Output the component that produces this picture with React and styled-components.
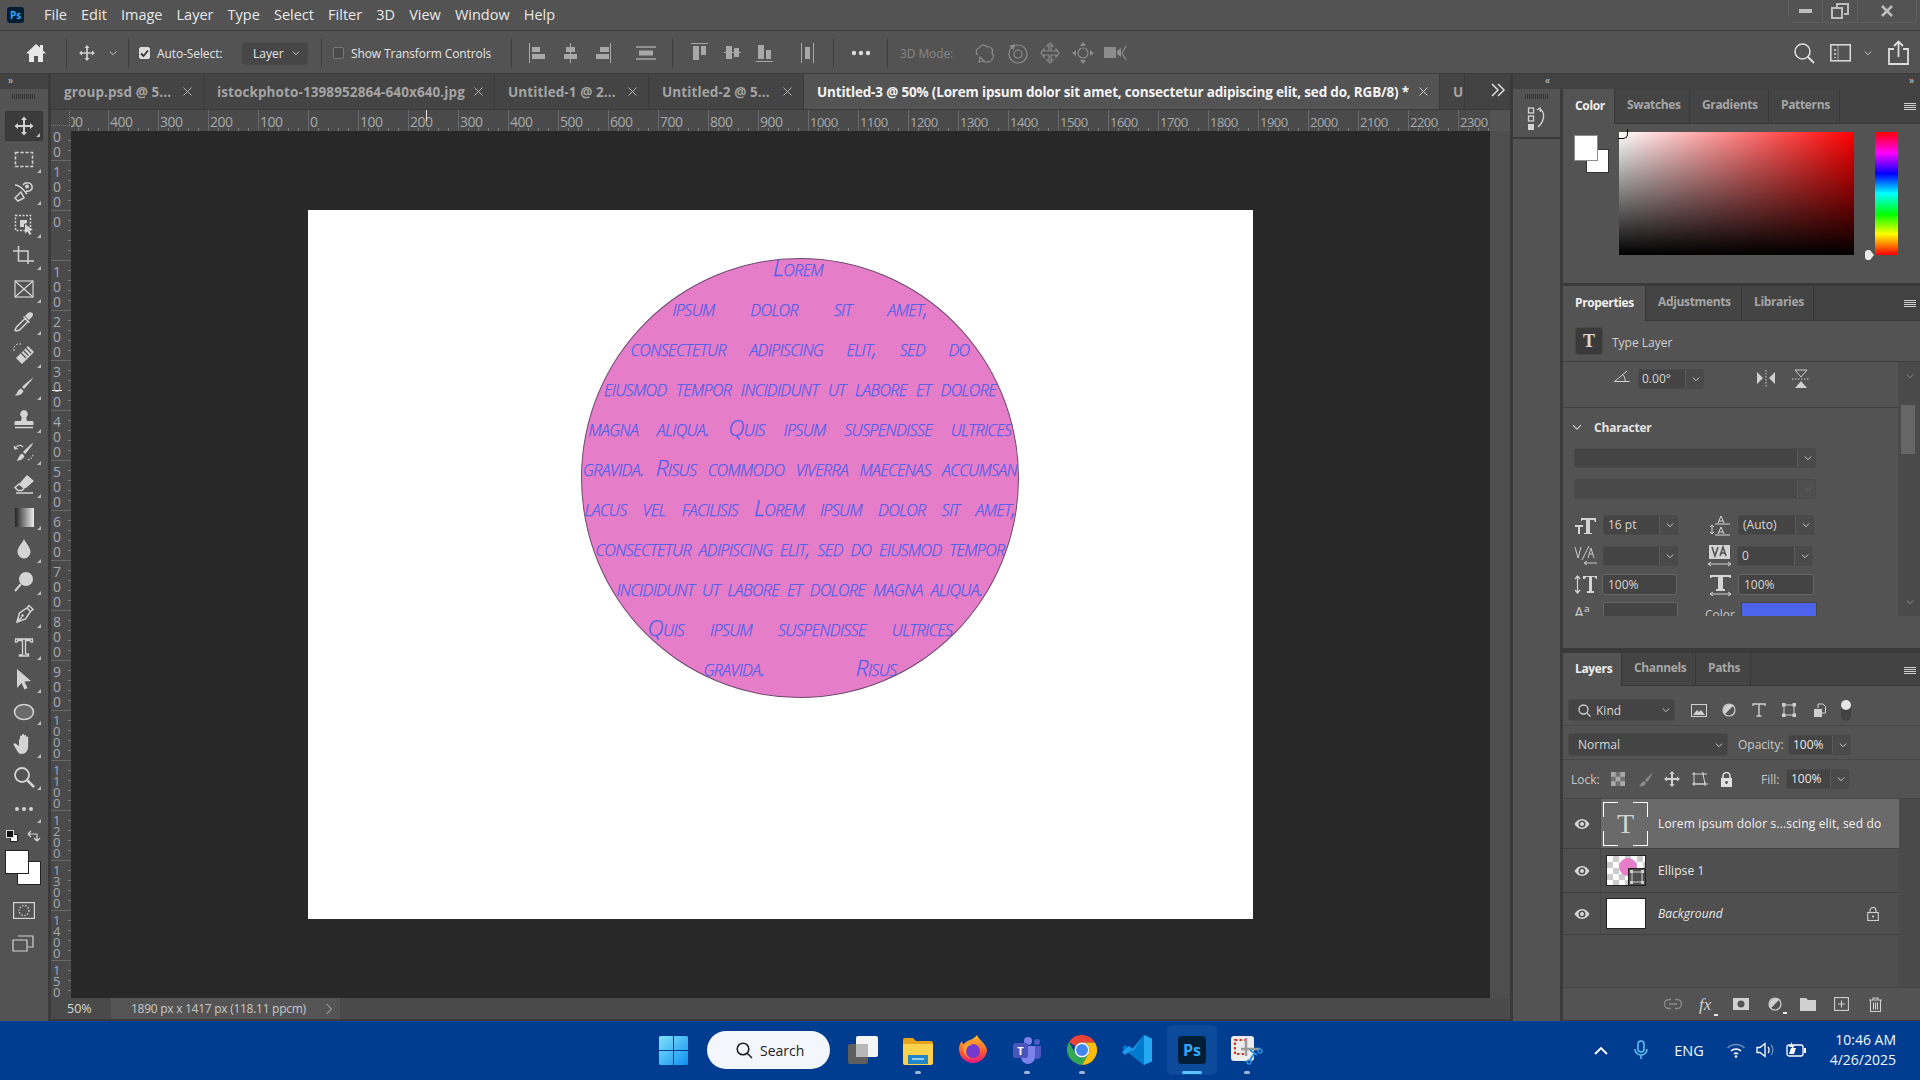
import React from "react";
import styled, { createGlobalStyle } from "styled-components";

const UI = `"Open Sans", "Noto Sans", sans-serif`;

const Global = createGlobalStyle`
  html, body { margin: 0; padding: 0; background: #535353; }
  body { width: 1920px; height: 1080px; overflow: hidden; font-family: ${UI}; }
  * { box-sizing: border-box; }
`;

const Page = styled.div`
  width: 1920px; height: 1080px; display: flex; flex-direction: column; overflow: hidden; background: #535353;
`;

/* ---------- menu ---------- */
const MenuBar = styled.div`
  height: 31px; flex: none; display: flex; align-items: center; position: relative;
  padding: 0 0 1px 7px; background: #535353; border-bottom: 1px solid #393939;
`;
const PsBadge = styled.div`
  width: 17px; height: 16px; border-radius: 3px; background: #001e36; color: #31a8ff;
  font: 700 10px/16px ${UI}; text-align: center; margin-right: 20px;
`;
const MenuItem = styled.span`
  font-size: 14.5px; color: #e8e8e8; margin-right: 14.1px;
`;
const WindowControls = styled.div`
  position: absolute; right: 3px; top: 0; width: 129px; height: 23px; display: flex;
  border: 1px solid #5e5e5e; border-top: 0; border-radius: 0 0 5px 5px;
`;
const WinBtn = styled.div`
  flex: ${p => p.$grow || 1}; display: flex; align-items: center; justify-content: center;
  border-left: ${p => (p.$first ? "0" : "1px solid #5e5e5e")};
`;

/* ---------- options ---------- */
const OptionsBar = styled.div`
  height: 43px; flex: none; display: flex; align-items: center; background: #535353; border-bottom: 1px solid #3b3b3b;
  padding: 2px 11px 0 0;
`;
const Glyph = styled.svg`
  flex: none; display: block; margin-left: ${p => p.$ml || 0}px; color: ${p => p.$c || "#d4d4d4"};
`;
const OptSep = styled.div`
  width: 1px; height: 29px; flex: none; background: #3d3d3d; margin-left: ${p => p.$ml}px;
`;
const OptLabel = styled.span`
  flex: none; width: ${p => p.$w}px; margin-left: ${p => p.$ml}px; font-size: 12px; white-space: nowrap;
  color: ${p => p.$c || "#e4e4e4"}; letter-spacing: -0.1px;
`;
const CheckBox = styled.div`
  flex: none; width: 11px; height: 12px; border-radius: 2px; margin-left: ${p => p.$ml}px;
  background: ${p => (p.$on ? "#dcdcdc" : "#4a4a4a")}; border: 1px solid ${p => (p.$on ? "#dcdcdc" : "#777")};
  display: flex; align-items: center; justify-content: center;
`;
const OptSelect = styled.div`
  flex: none; width: ${p => p.$w}px; margin-left: ${p => p.$ml}px; height: 23px; border: 1px solid #4a4a4a; border-radius: 3px;
  background: #464646; font-size: 12px; color: #e8e8e8; display: flex; align-items: center; justify-content: space-between;
  padding: 0 7px 0 10px;
`;
const RightGroup = styled.div`
  margin-left: auto; display: flex; align-items: center;
`;

/* ---------- workspace ---------- */
const Workspace = styled.div`
  flex: none; height: 947px; display: flex; background: #3a3a3a;
`;
const ToolsColumn = styled.div`
  width: 48px; flex: none; background: #535353; display: flex; flex-direction: column; align-items: center;
`;
const CollapseStrip = styled.div`
  align-self: stretch; height: 15px; flex: none; background: #424242; color: #d0d0d0; font-size: 10px; line-height: 13px;
  padding-left: ${p => p.$pad ?? 8}px; letter-spacing: -1px;
`;
const Grip = styled.div`
  width: 24px; height: 5px; margin: ${p => p.$m || "5px 0 12px"}; flex: none;
  background: repeating-linear-gradient(90deg, #343434 0 1px, transparent 1px 2px);
`;
const Tool = styled.div`
  width: 38px; height: 32.5px; flex: none; position: relative; display: flex; align-items: center; justify-content: center;
  ${p => p.$active && "background:#3b3b3b; border-radius:2px; border:1px solid #343434; height:30px; margin-bottom:2px;"}
  &::after { content:""; position:absolute; right:2px; bottom:3px; border-style:solid; border-width:0 0 4px 4px; border-color:transparent transparent #bdbdbd transparent; }
`;
const Swatches = styled.div`
  position: relative; width: 48px; height: 68px; flex: none;
`;
const SwatchMini = styled.div`
  position: absolute; left: ${p => p.$x}px; top: ${p => p.$y}px; width: ${p => p.$s}px; height: ${p => p.$s2 || p.$s}px;
  background: ${p => p.$c}; border: 1px solid ${p => p.$b};
`;
const ToolBottom = styled.div`
  width: 38px; height: 33px; flex: none; display: flex; align-items: center; justify-content: center; position: relative;
`;
const Seam = styled.div`
  width: ${p => p.$w}px; flex: none; background: #3a3a3a;
`;

const DocColumn = styled.div`
  width: 1459px; flex: none; display: flex; flex-direction: column; background: #535353;
`;
const TabBar = styled.div`
  height: 36px; flex: none; display: flex; background: #424242; border-bottom: 1px solid #393939; position: relative;
`;
const Tab = styled.div`
  flex: none; width: ${p => p.$w}px; display: flex; align-items: center; justify-content: space-between; padding: 0 11px 0 13px;
  background: ${p => (p.$active ? "#535353" : "#444")}; color: ${p => (p.$active ? "#f4f4f4" : "#a4a4a4")};
  border-right: 1px solid #3b3b3b; font-size: 13.5px; font-weight: 700; white-space: nowrap; overflow: hidden; letter-spacing: ${p => (p.$active ? -0.18 : 0.1)}px;
`;
const TabMore = styled.div`
  position: absolute; left: 1439px; top: 8px; color: #dcdcdc;
`;
const RulerRow = styled.div`
  height: 21px; flex: none; display: flex; background: #535353;
`;
const RulerCorner = styled.div`
  width: 20px; flex: none; background: #4a4a4a; position: relative;
  &::after { content:""; position:absolute; left:0; top:15px; width:19px; height:0; border-top:1px dotted #777; }
  &::before { content:""; position:absolute; left:18px; top:0; height:15px; width:0; border-left:1px dotted #777; }
`;
const HRuler = styled.div`
  width: 1419px; flex: none; display: flex; background: #4a4a4a; overflow: hidden; position: relative;
`;
const HCell = styled.div`
  width: 50px; flex: none; height: 21px; position: relative; margin-left: ${p => p.$ml || 0}px;
  border-left: 1px solid #6a6a6a; padding-left: 1px; color: #a6a9ad; font-size: ${p => p.$small ? 13 : 14}px; line-height: 24px; letter-spacing: -0.5px; white-space: nowrap;
  background: repeating-linear-gradient(90deg, transparent 0 9px, #7c7c7c 9px 10px) 0 bottom / 100% 3px no-repeat;
`;
const CursorMarkH = styled.div`
  position: absolute; left: 355px; top: 0; width: 1px; height: 11px; background: #e8e8e8;
`;
const MidRow = styled.div`
  flex: 1; min-height: 0; display: flex;
`;
const VRuler = styled.div`
  width: 20px; height: 867px; flex: none; background: #4a4a4a; overflow: hidden; position: relative; display: flex; flex-direction: column;
`;
const VCell = styled.div`
  height: 50px; flex: none; margin-top: ${p => p.$mt || 0}px; border-top: 1px solid #6a6a6a; display: flex; flex-direction: column;
  padding: ${p => p.$tight ? 4 : 3}px 0 0 2px; color: #a6a9ad; position: relative;
  background: repeating-linear-gradient(180deg, transparent 0 9px, #7c7c7c 9px 10px) right top / 3px 100% no-repeat;
`;
const VDigit = styled.span`
  font-size: ${p => p.$tight ? 13 : 14}px; line-height: ${p => p.$tight ? 11 : 15}px; height: ${p => p.$tight ? 11 : 15}px;
`;
const CursorMarkV = styled.div`
  position: absolute; left: 1px; top: 259px; height: 1px; width: 10px; background: #e8e8e8;
`;
const Canvas = styled.div`
  width: 1419px; height: 867px; flex: none; background: #282828; padding: 79px 0 0 237px;
`;
const DocPage = styled.div`
  width: 945px; height: 709px; background: #fff; padding: 48px 0 0 273px;
`;
const Circle = styled.div`
  width: 438px; height: 440px; border-radius: 50%; background: #e67dc8; border: 1px solid #6c4a70;
  display: flex; flex-direction: column; align-items: center;
`;
const TextFrame = styled.div`
  margin-top: -11px; display: flex; flex-direction: column; align-items: center;
`;
const TextLine = styled.div`
  width: ${p => p.$w}px; height: 40px; display: flex; justify-content: space-between; align-items: center; white-space: nowrap;
  font-family: "Open Sans", sans-serif; font-style: italic; font-variant: small-caps; font-weight: 300;
  font-size: 22.5px; color: #4a60ec; letter-spacing: -0.6px; line-height: 40px; -webkit-text-stroke: 0.25px #4a60ec;
`;
const ScrollStrip = styled.div`
  width: 20px; flex: none; background: #4e4e4e;
`;
const StatusBar = styled.div`
  height: 23px; flex: none; display: flex; align-items: stretch; background: #4a4a4a; color: #d8d8d8; font-size: 12px; border-bottom: 2px solid #3a3a3a;
`;
const StatusZoom = styled.div`
  width: 60px; flex: none; padding-left: 16px; line-height: 21px; font-size: 12.5px;
`;
const StatusInfo = styled.div`
  width: 229px; flex: none; background: #545454; padding: 0 7px 0 20px; display: flex; justify-content: space-between; align-items: center; letter-spacing: -0.27px; color: #c8c8c8;
`;

/* ---------- dock and panels ---------- */
const DockColumn = styled.div`
  width: 47px; flex: none; background: #3a3a3a; display: flex; flex-direction: column;
`;
const DockIcons = styled.div`
  height: 50px; flex: none; background: #535353; display: flex; flex-direction: column; align-items: center; border-bottom: 2px solid #3a3a3a;
`;
const DockFill = styled.div`
  flex: 1; background: #535353;
`;
const PanelsColumn = styled.div`
  width: 359px; flex: none; display: flex; flex-direction: column; background: #3a3a3a; position: relative;
`;
const TopStrip = styled.div`
  position: absolute; left: -50px; width: 409px; top: 0; height: 15px; background: #424242; color: #d0d0d0; font-size: 10px; line-height: 13px; letter-spacing: -1px;
  display: flex; justify-content: space-between; padding: 0 9px 0 32px;
`;
const Panel = styled.div`
  flex: none; height: ${p => p.$h}px; margin-top: ${p => p.$mt}px; background: #535353; display: flex; flex-direction: column; overflow: hidden;
`;
const PanelTabs = styled.div`
  height: ${p => p.$h || 35}px; flex: none; background: #424242; display: flex; position: relative; border-bottom: 1px solid #393939;
`;
const PanelTab = styled.div`
  width: ${p => p.$w}px; flex: none; display: flex; align-items: center; padding: 0 0 3px ${p => p.$pl || 12}px; font-size: 12px; font-weight: 700; letter-spacing: -0.35px;
  background: ${p => (p.$active ? "#535353" : "#444")}; color: ${p => (p.$active ? "#f0f0f0" : "#a6a6a6")};
  border-right: 1px solid #383838; margin-bottom: ${p => (p.$active ? "-1px" : 0)};
`;
const Burger = styled.div`
  position: absolute; right: 6px; top: 14px; width: 12px; height: 7px;
  background: repeating-linear-gradient(180deg, #cfcfcf 0 1px, transparent 1px 2px);
`;
const ColorBody = styled.div`
  flex: 1; display: flex; position: relative; padding: 8px 0 0 56px;
`;
const BigSwatches = styled.div`
  position: absolute; left: 11px; top: 11px; width: 36px; height: 40px;
`;
const ColorField = styled.div`
  width: 235px; height: 123px; flex: none; position: relative;
  background: linear-gradient(to top, #000, rgba(0,0,0,0)), linear-gradient(to right, #fff, #f00);
  &::after { content:""; position:absolute; left:-1px; top:-3px; width:9px; height:9px; border-radius:0 0 5px 0; border:1px solid #000; border-top:0; border-left:0; }
`;
const HueBar = styled.div`
  width: 23px; height: 123px; margin-left: 21px; flex: none; position: relative;
  background: linear-gradient(to bottom, #f00 0%, #f0f 17%, #00f 34%, #0ff 50%, #0f0 67%, #ff0 83%, #f00 100%);
  &::before { content:""; position:absolute; left:-10px; bottom:-5px; width:5px; height:10px; background:#e8e8e8; border-radius:3px 0 0 3px; }
  &::after { content:""; position:absolute; left:-5px; bottom:-5px; border-style:solid; border-width:5px 0 5px 4px; border-color:transparent transparent transparent #e8e8e8; }
`;
const PropsHeader = styled.div`
  height: 41px; flex: none; display: flex; align-items: center; padding-left: 12px; border-bottom: 1px solid #3e3e3e; color: #cfcfcf; font-size: 12px;
`;
const TypeBadge = styled.div`
  width: 28px; height: 28px; flex: none; background: #3a3a3a; border: 1px solid #4a4a4a; border-radius: 3px; color: #d8d8d8; margin-right: 9px;
  font: 700 18px/26px "Liberation Serif", serif; text-align: center;
`;
const TypeCaption = styled.span`
  padding-top: 3px;
`;
const PropsScrollWrap = styled.div`
  height: 254px; flex: none; display: flex;
`;
const PropsMain = styled.div`
  width: 335px; flex: none; overflow: hidden; display: flex; flex-direction: column;
`;
const ScrollRail = styled.div`
  width: 24px; flex: none; background: #4a4a4a; position: relative; display: flex; flex-direction: column; justify-content: space-between; align-items: center; padding: 10px 0;
`;
const ScrollThumb = styled.div`
  position: absolute; left: 3px; top: 43px; width: 14px; height: 49px; background: #666;
`;
const PropRow = styled.div`
  height: 46px; flex: none; display: flex; align-items: flex-start; padding-top: 7px; border-bottom: 1px solid #3e3e3e;
`;
const CharHead = styled.div`
  height: 38px; margin-bottom: 2px; flex: none; display: flex; align-items: center; padding-left: 9px; color: #e2e2e2; font-size: 12px; font-weight: 700; letter-spacing: -0.2px;
`;
const CharTitle = styled.span`
  margin-left: 12px;
`;
const Field = styled.div`
  flex: none; width: ${p => p.$w}px; height: ${p => p.$h || 20}px; margin-left: ${p => p.$ml || 0}px; display: flex;
  background: #444; border: 1px solid ${p => p.$border || "#4a4a4a"}; border-radius: 3px; color: ${p => p.$c || "#d6d6d6"}; font-size: 12px; overflow: hidden;
`;
const DropField = styled(Field)`
  align-items: center; justify-content: space-between; padding: 0 4px 0 9px;
`;
const KindText = styled.span`
  flex: 1; margin-left: 5px;
`;
const FieldText = styled.div`
  flex: 1; padding-left: ${p => p.$pl ?? 5}px; line-height: ${p => p.$lh || 18}px; white-space: nowrap; background: ${p => p.$bg || "transparent"};
  color: ${p => p.$c || "inherit"};
`;
const FieldArrow = styled.div`
  width: ${p => p.$w || 18}px; flex: none; border-left: 1px solid #5a5a5a; padding-left: 2px; display: flex; align-items: center; justify-content: center; background: ${p => p.$bg || "#4a4a4a"};
`;
const CharRow = styled.div`
  flex: none; height: ${p => p.$h}px; margin-top: ${p => p.$mt || 0}px; display: flex; align-items: ${p => p.$start ? "flex-start" : "center"}; padding-left: ${p => p.$pl || 0}px;
`;
const TinyLabel = styled.span`
  font-size: ${p => p.$fs || 12}px; line-height: ${p => p.$lh ? p.$lh + "px" : "normal"}; color: #c8c8c8; margin-left: ${p => p.$ml || 0}px; width: ${p => p.$w || "auto"}px; flex: none; white-space: nowrap;
`;
const ColorChip = styled.div`
  width: 76px; height: 20px; margin-left: 2px; flex: none; background: #4d63ea; border: 1px solid #444;
`;
const LayerToolbar = styled.div`
  height: ${p => p.$h}px; flex: none; display: flex; align-items: center; padding: ${p => p.$pt || 0}px 0 0 ${p => p.$pl || 5}px; border-bottom: 1px solid #474747;
`;
const ToggleDot = styled.div`
  position: relative; margin-left: ${p => p.$ml}px; width: 10px; height: 21px; flex: none; border-radius: 5px; background: #424242;
  &::before { content:""; position:absolute; left:0; top:0; width:10px; height:10px; border-radius:50%; background:#e4e4e4; }
`;
const LayerRow = styled.div`
  height: ${p => p.$h}px; flex: none; display: flex; align-items: center; border-bottom: 1px solid #3f3f3f;
`;
const EyeCol = styled.div`
  width: 38px; height: 100%; flex: none; display: flex; align-items: center; justify-content: center; border-right: 1px solid #474747;
`;
const LayerMain = styled.div`
  width: 298px; height: 100%; flex: none; display: flex; align-items: center; position: relative;
  background: ${p => (p.$sel ? "#6a6a6a" : "transparent")};
`;
const TypeThumb = styled.div`
  width: 45px; height: 44px; flex: none; margin-left: 2px; display: flex; align-items: center; justify-content: center; position: relative;
  color: #d4d4d4; font: 400 28px/1 "Liberation Serif", serif;
  background:
    linear-gradient(#fff,#fff) 0 0/15px 1px no-repeat, linear-gradient(#fff,#fff) 0 0/1px 15px no-repeat,
    linear-gradient(#fff,#fff) 100% 0/15px 1px no-repeat, linear-gradient(#fff,#fff) 100% 0/1px 15px no-repeat,
    linear-gradient(#fff,#fff) 0 100%/15px 1px no-repeat, linear-gradient(#fff,#fff) 0 100%/1px 15px no-repeat,
    linear-gradient(#fff,#fff) 100% 100%/15px 1px no-repeat, linear-gradient(#fff,#fff) 100% 100%/1px 15px no-repeat;
`;
const ShapeThumb = styled.div`
  width: 40px; height: 31px; flex: none; margin-left: 5px; position: relative; border: 1px solid #222;
  background: conic-gradient(#ccc 25%, #fff 0 50%, #ccc 0 75%, #fff 0) 0 0 / 12px 12px;
  &::before { content:""; position:absolute; left:12px; top:2px; width:18px; height:18px; border-radius:50%; background:#e67dc8; }
`;
const ShapeBadge = styled.div`
  position: absolute; right: -1px; bottom: -1px; width: 18px; height: 18px; background: #4e4e4e; border: 1px solid #222; display: flex; align-items: center; justify-content: center;
`;
const WhiteThumb = styled.div`
  width: 40px; height: 31px; flex: none; margin-left: 5px; background: #fff; border: 1px solid #222;
`;
const LayerName = styled.span`
  position: absolute; left: 57px; font-size: 12px; color: ${p => p.$c || "#e8e8e8"}; font-style: ${p => (p.$it ? "italic" : "normal")}; white-space: nowrap; letter-spacing: ${p => p.$ls ?? 0.1}px;
`;
const LayersFill = styled.div`
  flex: 1;
`;
const LayersFoot = styled.div`
  flex: 1; display: flex; align-items: center; border-top: 1px solid #424242; background: #535353; padding-left: 101px;
`;
const LayerList = styled.div`
  flex: none; width: 335px;
`;
const LayerListWrap = styled.div`
  flex: none; display: flex; flex-direction: column; height: 188px; background: linear-gradient(90deg, #4f4f4f 335px, #4a4a4a 335px);
`;
const CaretWrap = styled.div`
  position: relative; flex: none; margin-left: ${p => p.$ml}px;
  &::after { content:""; position:absolute; right:-5px; bottom:-3px; width:4px; height:2px; background:#e8e8e8; }
`;
const FxLabel = styled.span`
  display: block; width: 14px; font: italic 400 17px/1 "Liberation Serif", serif; color: #cfcfcf;
`;

/* ---------- taskbar ---------- */
const Taskbar = styled.div`
  height: 59px; flex: none; position: relative; background: #003c8f; display: flex; align-items: center; color: #fff; padding: 0 0 2px 659px; border-top: 1px solid #0a468f;
`;
const SearchPill = styled.div`
  width: 123px; height: 38px; flex: none; margin-left: 19px; background: #f3f6fc; border-radius: 19px; display: flex; align-items: center; padding-left: 29px; color: #1c1c1c; font-size: 14px; gap: 7px;
`;
const TaskSlot = styled.div`
  flex: none; width: ${p => p.$w}px; margin-left: ${p => p.$ml}px; height: 50px; position: relative; display: flex; align-items: center; justify-content: center;
  ${p => p.$active && "background:#0c4a9c; border-radius:5px;"}
  ${p => p.$dot && `&::after{content:""; position:absolute; left:50%; transform:translateX(-50%); bottom:1px; width:${p.$active ? 20 : 6}px; height:3px; border-radius:2px; background:${p.$active ? "#58c6fb" : "#9fb5d6"};}`}
`;
const PsTile = styled.div`
  width: 28px; height: 28px; border-radius: 4px; background: #001e36; color: #31a8ff; font: 700 16px/28px ${UI}; text-align: center;
`;
const Tray = styled.div`
  position: absolute; right: 24px; top: 0; bottom: 2px; display: flex; align-items: center;
`;
const TrayText = styled.span`
  font-size: 14.5px; margin-left: ${p => p.$ml}px; color: #f4f8ff;
`;
const Clock = styled.div`
  margin-left: 24px; text-align: right; font-size: 14px; line-height: 20px; color: #f4f8ff;
`;

/* ---------- glyphs ---------- */
const S = ({ w = 24, h = 24, vb, ml, c, children, ...rest }) => (
  <Glyph width={w} height={h} viewBox={vb || `0 0 ${w} ${h}`} $ml={ml} $c={c} fill="none" stroke="currentColor" strokeWidth="1.5" {...rest}>{children}</Glyph>
);
const SwapIcon = styled(S)`
  position: absolute; left: 27px; top: 4px;
`;
const LockIcon = styled(S)`
  position: absolute; left: 266px;
`;
const F = { fill: "currentColor", stroke: "none" };

const Chevron = ({ ml, c = "#c8c8c8", s = 8 }) => (
  <S w={s} h={s} vb="0 0 8 8" ml={ml} c={c} strokeWidth="1"><path d="M.8 2.5 4 5.7 7.2 2.5" /></S>
);
const MovePath = "M12 2.5l3 3.5h-2v5h5V9l3.5 3-3.5 3v-2h-5v5h2l-3 3.5L9 18h2v-5H6v2l-3.5-3L6 9v2h5V6H9z";

const toolIcons = [
  <S><path {...F} d={MovePath} /></S>,
  <S><rect x="3.5" y="5.5" width="17" height="14" strokeDasharray="3.2 1.8" /></S>,
  <S><path d="M3 5c4 0 9 5 12 9M3 18l6-6 3 6-6 3zM11 5c2-3 8-3 9 1s-3 6-6 5" /><circle cx="15" cy="6.5" r="2" {...F} /></S>,
  <S><rect x="3.5" y="3.5" width="15" height="15" strokeDasharray="2 1.5" /><path {...F} d="M8 8h7v3l-3 1v3H8zM13 12l8 6-3.5.5 2 3.5-2 1-2-3.5-2.5 2z" /></S>,
  <S><path d="M1 6h15v13M6.5 1v15h15M19 16h3" /></S>,
  <S strokeWidth="1.2"><rect x="3" y="4" width="18" height="16" /><path d="M3 4l18 16M21 4L3 20" /></S>,
  <S><path d="M4 21l-1-1 1.5-3L13 8.5l3 3L7.500 20zM11.500 6.500l6 6" /><path {...F} d="M13 6l3-3c1.500-1.500 5-1 5 1.500 0 1-.5 2-1.500 3l-2.500 2.500z" /></S>,
  <S strokeWidth="1"><path {...F} d="M4 16L16 4l6 6-12 12z" /><path d="M2 9V5l3-3h4" strokeDasharray="2 1.500" /><path stroke="#535353" strokeWidth="1.300" d="M9 11l5 5M11.500 8.500l5 5M14 6l5 5" /></S>,
  <S><path {...F} d="M21.500 2.500c-3 4-7 9-9.500 11.500l-2-2c3-3 8-7 11.500-9.500zM9 13.500l2.500 2.500c-1 3-4 5-8.500 4.500 2.500-1.500 2-5.500 6-7z" /></S>,
  <S><path {...F} d="M12 3a4 4 0 0 1 2.500 7c-.5 1.500 0 3 1 4H20c1 0 1.500.5 1.500 1.500V18h-19v-2.500c0-1 .5-1.500 1.500-1.500h4.500c1-1 1.500-2.500 1-4A4 4 0 0 1 12 3z" /><path d="M3 20.500h18" /></S>,
  <S strokeWidth="1.200"><path {...F} d="M21.500 2.500c-2 4-6 9-8.500 11.500l-2-2c3-3 7-7 10.500-9.500zM10 13.500l2.500 2.500c-1 3-4 5-8 4.500 2.500-1.500 2-5.500 5.500-7z" /><path d="M3 8c3-3 6-3 8-1M2 6l1 3 3-.5" /><path d="M16 20c3-1 5-3 5-6" strokeDasharray="1.500 1.500" /></S>,
  <S><path {...F} d="M15 3l7 6-8 7-2 0-5-4z" /><path d="M7 12l5 4-2 2.500H6l-3-3zM4 21h17" /></S>,
];
const toolIcons2 = [
  <S strokeWidth="0"><defs><linearGradient id="gr1" x1="0" y1="0" x2="1" y2="0"><stop offset="0" stopColor="#222" /><stop offset="1" stopColor="#eee" /></linearGradient></defs><rect x="3" y="3" width="19" height="19" fill="url(#gr1)" /></S>,
  <S><path {...F} d="M12 2c2 4.500 6.500 8 6.500 13a6.500 6.500 0 0 1-13 0C5.500 10 10 6.500 12 2z" /></S>,
  <S><circle cx="14" cy="9" r="7" {...F} /><path d="M9 14l-6 7" strokeWidth="2" /></S>,
  <S><path d="M5 20l2.500-9L15 6l3.500 3.500L13.500 17zM5 20l5-5M15 6l2-2.500L21 7.500 18.500 9.500" /><circle cx="10.500" cy="13.500" r="1.300" {...F} /></S>,
  <S strokeWidth="1.300"><path d="M3.500 7V4h17v3h-1.500l-1-1.500H13.500v13.500h3V21h-9v-1h3V5.500H6L5 7z" /></S>,
  <S><path {...F} d="M5 2l14 12-6.500.5 3 6.500-3 1.500-3-6.500L5 21z" /></S>,
  <S strokeWidth="1.500"><ellipse cx="12" cy="12" rx="9.500" ry="7.500" fill="#6a6a6a" /></S>,
  <S><path {...F} d="M8 8V4.500c0-1.500 2-1.500 2 0V3c0-1.500 2.200-1.500 2.200 0v1c0-1.500 2-1.500 2 0v1.500c0-1.500 2-1.300 2 0V14c0 5-3 8-6.500 8-3 0-4-2-5-4l-3-5c-.7-1.300 1-2.500 2-1.300L7 14V8c0-1.500 1-1.300 1 0z" /></S>,
  <S strokeWidth="1.800"><circle cx="10" cy="10" r="7" /><path d="M15 15l7 7" strokeWidth="2.500" /></S>,
  <S><g {...F}><circle cx="5" cy="12" r="2" /><circle cx="12" cy="12" r="2" /><circle cx="19" cy="12" r="2" /></g></S>,
];

const AlignIcon = ({ kind, ml, w, c = "#a8a8a8" }) => {
  const shapes = {
    l: <><path d="M.5 0v20" strokeWidth="1" /><path {...F} d="M3 4h8v5H3zM3 11h13v5H3z" /></>,
    c: <><path d="M7.500 0v20" strokeWidth="1" /><path {...F} d="M3 4h9v5H3zM1 11h13v5H1z" /></>,
    r: <><path d="M15.500 0v20" strokeWidth="1" /><path {...F} d="M5 4h9v5H5zM1 11h13v5H1z" /></>,
    h: <><path d="M0 4h20M0 16h20" strokeWidth="1.300" /><path {...F} d="M3 7.500h14v5H3z" /></>,
    t: <><path d="M0 .5h17" strokeWidth="1" /><path {...F} d="M2 3h6v14H2zM10 3h5v9h-5z" /></>,
    m: <><path d="M0 9.500h17" strokeWidth="1" /><path {...F} d="M2 3h6v13H2zM10 5h5v9h-5z" /></>,
    b: <><path d="M0 18.500h17" strokeWidth="1" /><path {...F} d="M2 2h6v14H2zM10 7h5v9h-5z" /></>,
    d: <><path d="M.5 0v20M12.500 0v20" strokeWidth="1" /><path {...F} d="M4 4h5v12H4z" /></>,
  };
  return <S w={w} h={20} ml={ml} c={c}>{shapes[kind]}</S>;
};

const Eye = () => (
  <S w={16} h={12} c="#d8d8d8"><path {...F} d="M8 1c3.500 0 6 2.500 7.500 5C14 8.500 11.500 11 8 11S2 8.500.5 6C2 3.500 4.500 1 8 1zm0 1.500A3.500 3.500 0 1 0 8 9.500 3.500 3.500 0 0 0 8 2.500zM8 4a2 2 0 1 1 0 4 2 2 0 0 1 0-4z" fillRule="evenodd" /></S>
);

const ChromeIcon = () => (
  <svg width="30" height="30" viewBox="0 0 30 30">
    <path fill="#ea4335" d="M15 0a15 15 0 0 1 13 7.500H15a7.500 7.500 0 0 0-6.500 3.750L2 7A15 15 0 0 1 15 0z" />
    <path fill="#34a853" d="M2 7l6.500 11.750A7.500 7.500 0 0 0 15 22.500L8.500 28A15 15 0 0 1 2 7z" />
    <path fill="#34a853" d="M8.500 28l6.500-5.500a7.500 7.500 0 0 0 6.500-3.750L15 30a15 15 0 0 1-6.500-2z" />
    <path fill="#fbbc04" d="M28 7.500A15 15 0 0 1 15 30l6.500-11.250A7.500 7.500 0 0 0 15 7.500z" />
    <circle cx="15" cy="15" r="7.500" fill="#fff" />
    <circle cx="15" cy="15" r="6" fill="#4285f4" />
  </svg>
);

const TabX = ({ light }) => (
  <S w={9} h={9} c={light ? "#d8d8d8" : "#c0c0c0"} strokeWidth="0.900"><path d="M.5.500l8 8M8.500.500l-8 8" /></S>
);

const rulerH = [500,400,300,200,100,0,100,200,300,400,500,600,700,800,900,1000,1100,1200,1300,1400,1500,1600,1700,1800,1900,2000,2100,2200,2300];
const rulerV = [200,100,0,100,200,300,400,500,600,700,800,900,1000,1100,1200,1300,1400,1500];

const lines = [
  [54, "Lorem"],
  [255, "ipsum dolor sit amet,"],
  [339, "consectetur adipiscing elit, sed do"],
  [392, "eiusmod tempor incididunt ut labore et dolore"],
  [423, "magna aliqua. Quis ipsum suspendisse ultrices"],
  [434, "gravida. Risus commodo viverra maecenas accumsan"],
  [431, "lacus vel facilisis Lorem ipsum dolor sit amet,"],
  [409, "consectetur adipiscing elit, sed do eiusmod tempor"],
  [367, "incididunt ut labore et dolore magna aliqua."],
  [305, "Quis ipsum suspendisse ultrices"],
  [193, "gravida. Risus"],
];

const Select = ({ w, ml, text, h, pl }) => (
  <Field $w={w} $ml={ml} $h={h}><FieldText $pl={pl}>{text}</FieldText><FieldArrow><Chevron /></FieldArrow></Field>
);

export default function App() {
  return (
    <Page>
      <Global />
      <MenuBar>
        <PsBadge>Ps</PsBadge>
        {["File","Edit","Image","Layer","Type","Select","Filter","3D","View","Window","Help"].map(m => <MenuItem key={m}>{m}</MenuItem>)}
        <WindowControls>
          <WinBtn $first $grow={34}><S w={13} h={4} c="#bdbdbd"><rect x="0" y="0" width="13" height="4" {...F} /></S></WinBtn>
          <WinBtn $grow={34}><S w={18} h={16} c="#bdbdbd" strokeWidth="2"><rect x="1" y="5" width="10" height="10" /><path d="M6 4V1h11v10h-4" /></S></WinBtn>
          <WinBtn $grow={59}><S w={14} h={14} c="#bdbdbd" strokeWidth="2.500"><path d="M2 2l10 10M12 2L2 12" /></S></WinBtn>
        </WindowControls>
      </MenuBar>

      <OptionsBar>
        <S w={20} h={20} ml={26} c="#e8e8e8"><path {...F} d="M10 1L0 10.500h3V19h5v-6h4v6h5v-8.500h3l-3-3V2h-3v2.500z" /></S>
        <OptSep $ml={20} />
        <S w={20} h={20} vb="0 0 24 24" ml={10}><path {...F} d={MovePath} /></S>
        <Chevron ml={12} />
        <OptSep $ml={11} />
        <CheckBox $ml={10} $on><S w={9} h={9} c="#333" strokeWidth="1.800"><path d="M1 4.500l2.500 2.500L8 1.500" /></S></CheckBox>
        <OptLabel $w={67} $ml={7}>Auto-Select:</OptLabel>
        <OptSelect $w={66} $ml={18}>Layer<Chevron /></OptSelect>
        <OptSep $ml={13} />
        <CheckBox $ml={11} />
        <OptLabel $w={140} $ml={7}>Show Transform Controls</OptLabel>
        <OptSep $ml={20} />
        <AlignIcon kind="l" ml={17} w={17} />
        <AlignIcon kind="c" ml={17} w={15} />
        <AlignIcon kind="r" ml={17} w={16} />
        <AlignIcon kind="h" ml={25} w={20} />
        <OptSep $ml={16} />
        <AlignIcon kind="t" ml={18} w={17} />
        <AlignIcon kind="m" ml={16} w={17} />
        <AlignIcon kind="b" ml={15} w={17} />
        <AlignIcon kind="d" ml={28} w={13} />
        <OptSep $ml={19} />
        <S w={20} h={6} ml={17} c="#dcdcdc"><g {...F}><circle cx="3" cy="3" r="2.200" /><circle cx="10" cy="3" r="2.200" /><circle cx="17" cy="3" r="2.200" /></g></S>
        <OptSep $ml={16} />
        <OptLabel $w={54} $ml={12} $c="#868686">3D Mode:</OptLabel>
        <S w={22} h={22} ml={20} c="#8c8c8c" strokeWidth="1.200"><path d="M4 13c-3-2-2-6 1-7 1-3 6-4 8-1 3-1 7 2 5 6 2 2 2 5-1 7M6 15l-1 5 5-1zM9 19c3 2 6 1 8 0" /></S>
        <S w={21} h={22} ml={11} c="#8c8c8c" strokeWidth="1.200"><circle cx="11" cy="12" r="9" /><circle cx="11" cy="12" r="4" /><path {...F} d="M2 4l6-2-1 6z" /></S>
        <S w={20} h={22} ml={12} c="#8c8c8c" strokeWidth="1.200"><path d="M10 1l3 3h-2v5h5V7l3 4-3 4v-2h-5v5h2l-3 3-3-3h2v-5H4v2l-3-4 3-4v2h5V4H7z" /></S>
        <S w={22} h={22} ml={12} c="#8c8c8c" strokeWidth="1.200"><circle cx="11" cy="11" r="5" /><path {...F} d="M11 0l3 4H8zM11 22l3-4H8zM0 11l4-3v6zM22 11l-4-3v6z" /></S>
        <S w={23} h={22} ml={10} c="#8c8c8c" strokeWidth="1.200"><path {...F} d="M0 5h12v11H0zM13 9l4-3v9l-4-3z" /><path d="M22 4l-4 7 4 7" /></S>
        <RightGroup>
          <S w={22} h={22} strokeWidth="1.500" c="#dedede"><circle cx="9.500" cy="9.500" r="7.500" /><path d="M15 15l6 6" strokeWidth="2" /></S>
          <S w={21} h={18} ml={15} c="#dedede"><rect x=".8" y=".8" width="19.500" height="16" /><path d="M5 5v2M5 9v2M5 13v1" /><path d="M8 1v16" strokeWidth=".6" /></S>
          <Chevron ml={13} />
          <S w={21} h={26} ml={16} c="#dedede" strokeWidth="1.800"><path d="M6 9H1v15h19V9h-5M10.500 17V2M6 6l4.500-4.500L15 6" /></S>
        </RightGroup>
      </OptionsBar>

      <Workspace>
        <ToolsColumn>
          <CollapseStrip $pad={8}>››</CollapseStrip>
          <Grip />
          <Tool $active>{toolIcons[0]}</Tool>
          {toolIcons.slice(1).map((ic, i) => <Tool key={i}>{ic}</Tool>)}
          {toolIcons2.map((ic, i) => <Tool key={i}>{ic}</Tool>)}
          <Swatches>
            <SwatchMini $x={10} $y={8} $s={8} $c="#fff" $b="#222" />
            <SwatchMini $x={6} $y={4} $s={8} $c="#111" $b="#ddd" />
            <SwapIcon w={14} h={14} c="#d4d4d4" strokeWidth="1.200"><path d="M1 4h9v7M1 4l3-3M1 4l3 3M10 11l-3-3M10 11l3-3" /></SwapIcon>
            <SwatchMini $x={17} $y={35} $s={24} $s2={24} $c="#fff" $b="#222" />
            <SwatchMini $x={5} $y={24} $s={24} $s2={24} $c="#fff" $b="#222" />
          </Swatches>
          <ToolBottom><S w={22} h={17} strokeWidth="1.200"><rect x=".6" y=".6" width="20.800" height="15.800" /><circle cx="11" cy="8.500" r="5" strokeDasharray="1.500 1.500" /></S></ToolBottom>
          <ToolBottom><S w={24} h={18} strokeWidth="1.200"><path d="M6 2h15v11h-5M1 6h14v11H1z" /></S></ToolBottom>
        </ToolsColumn>
        <Seam $w={3} />

        <DocColumn>
          <TabBar>
            <Tab $w={153}><span>group.psd @ 5...</span><TabX /></Tab>
            <Tab $w={291}><span>istockphoto-1398952864-640x640.jpg</span><TabX /></Tab>
            <Tab $w={154}><span>Untitled-1 @ 2...</span><TabX /></Tab>
            <Tab $w={155}><span>Untitled-2 @ 5...</span><TabX /></Tab>
            <Tab $w={636} $active><span>Untitled-3 @ 50% (Lorem ipsum dolor sit amet, consectetur adipiscing elit, sed do, RGB/8) *</span><TabX light /></Tab>
            <Tab $w={23}>U</Tab>
            <TabMore><S w={16} h={16} c="#dcdcdc" strokeWidth="1.500"><path d="M2 2l6 6-6 6M8 2l6 6-6 6" /></S></TabMore>
          </TabBar>
          <RulerRow>
            <RulerCorner />
            <HRuler>
              {rulerH.map((n, i) => <HCell key={i} $ml={i === 0 ? -13 : 0} $small={n >= 1000}>{n}</HCell>)}
              <CursorMarkH />
            </HRuler>
          </RulerRow>
          <MidRow>
            <VRuler>
              {rulerV.map((n, i) => (
                <VCell key={i} $mt={i === 0 ? -21 : 0} $tight={n >= 1000}>
                  {String(n).split("").map((d, j) => <VDigit key={j} $tight={n >= 1000}>{d}</VDigit>)}
                </VCell>
              ))}
              <CursorMarkV />
            </VRuler>
            <Canvas>
              <DocPage>
                <Circle>
                  <TextFrame>
                    {lines.map(([w, t], i) => (
                      <TextLine key={i} $w={w}>
                        {t.split(" ").map((word, j) => <span key={j}>{word}</span>)}
                      </TextLine>
                    ))}
                  </TextFrame>
                </Circle>
              </DocPage>
            </Canvas>
            <ScrollStrip />
          </MidRow>
          <StatusBar>
            <StatusZoom>50%</StatusZoom>
            <StatusInfo><span>1890 px x 1417 px (118.11 ppcm)</span><S w={8} h={12} c="#bbb" strokeWidth="1"><path d="M1.500 1l5 5-5 5" /></S></StatusInfo>
          </StatusBar>
        </DocColumn>
        <Seam $w={3} />

        <DockColumn>
          <CollapseStrip $pad={0} />
          <DockIcons>
            <Grip $m="5px 0 8px" />
            <S w={20} h={24} c="#d4d4d4" strokeWidth="1.300"><rect x="1.500" y="1" width="5" height="5" /><rect x="1.500" y="9" width="5" height="5" /><rect x="1" y="17" width="6" height="6" {...F} /><path d="M10 3l3-2 .5 4M13 2c5 3 5 12-2 18" /></S>
          </DockIcons>
          <DockFill />
        </DockColumn>
        <Seam $w={3} />

        <PanelsColumn>
          <TopStrip><span>‹‹</span><span>››</span></TopStrip>
          <Panel $mt={15} $h={194}>
            <PanelTabs>
              <PanelTab $active $w={52} $pl={12}>Color</PanelTab>
              <PanelTab $w={75}>Swatches</PanelTab>
              <PanelTab $w={79}>Gradients</PanelTab>
              <PanelTab $w={71}>Patterns</PanelTab>
              <Burger />
            </PanelTabs>
            <ColorBody>
              <BigSwatches>
                <SwatchMini $x={12} $y={14} $s={23} $s2={24} $c="#fff" $b="#333" />
                <SwatchMini $x={0} $y={0} $s={24} $s2={26} $c="#fff" $b="#8d8d8d" />
              </BigSwatches>
              <ColorField />
              <HueBar />
            </ColorBody>
          </Panel>
          <Panel $mt={3} $h={362}>
            <PanelTabs>
              <PanelTab $active $w={83}>Properties</PanelTab>
              <PanelTab $w={96}>Adjustments</PanelTab>
              <PanelTab $w={72}>Libraries</PanelTab>
              <Burger />
            </PanelTabs>
            <PropsHeader><TypeBadge>T</TypeBadge><TypeCaption>Type Layer</TypeCaption></PropsHeader>
            <PropsScrollWrap>
              <PropsMain>
                <PropRow>
                  <S w={16} h={14} ml={51} c="#d0d0d0" strokeWidth="1"><path d="M.5 12.500h15M.5 12.500L13 2M9 6c2 2 2 4 2 6.500" /></S>
                  <Select w={66} ml={8} text="0.00°" h={20} pl={3} />
                  <S w={20} h={20} ml={52} c="#d0d0d0" strokeWidth="1"><path {...F} d="M1 3l6 6-6 6zM19 3l-6 6 6 6z" /><path d="M10 1v18" strokeDasharray="1.500 1.500" /></S>
                  <S w={18} h={20} ml={16} c="#d0d0d0" strokeWidth="1"><path d="M3 1h12L9 8z" /><path {...F} d="M3 19h12L9 12z" /><path d="M0 10h18" strokeDasharray="1.500 1.500" /></S>
                </PropRow>
                <CharHead><Chevron s={10} /><CharTitle>Character</CharTitle></CharHead>
                <CharRow $h={20} $pl={11}><Select w={242} /></CharRow>
                <CharRow $h={20} $mt={11} $pl={11}><Field $w={242}><FieldText $bg="#484848" /><FieldArrow $bg="#4e4e4e"><Chevron c="#6c6c6c" /></FieldArrow></Field></CharRow>
                <CharRow $h={20} $mt={16} $pl={12}>
                  <S w={22} h={18} c="#d4d4d4"><path {...F} d="M6 2h15v4h-1l-1-2h-4v13h2v1H9v-1h2V4H7L6 6zM0 9h8v2H5v7H3v-7H0z" /></S>
                  <Select w={75} ml={6} text="16 pt" pl={4} />
                  <S w={22} h={22} ml={31} c="#d4d4d4" strokeWidth="1"><path d="M9 9l3-7 3 7M10 7h4M6 10h15M9 20l3-7 3 7M10 18h4M6 21h15M3 11v9M1 13l2-2 2 2M1 18l2 2 2-2" /></S>
                  <Select w={76} ml={7} text="(Auto)" pl={4} />
                </CharRow>
                <CharRow $h={20} $mt={11} $pl={11}>
                  <S w={23} h={22} c="#c8c8c8" strokeWidth="1"><path d="M1 2l3 11 3-11M15 1L8 15M14 13l3-10 3 10M15 9h4M10 18h13M10 18l3-2M10 18l3 2" /></S>
                  <Select w={75} ml={6} />
                  <S w={23} h={24} ml={30} c="#d4d4d4" strokeWidth="1"><rect x="1" y="1" width="21" height="14" {...F} /><path stroke="#535353" strokeWidth="1.600" d="M4 3l3 9 3-9M12 12l3-9 3 9M13 9h4" /><path d="M0 20h23M0 20l3-2M0 20l3 2M23 20l-3-2M23 20l-3 2" /></S>
                  <Select w={76} ml={6} text="0" pl={4} />
                </CharRow>
                <CharRow $h={21} $mt={8} $pl={11}>
                  <S w={23} h={20} c="#d4d4d4"><path {...F} d="M9 1h14v3h-1l-1-2h-3v14h2v2h-7v-2h2V2h-3l-1 2H9z" /><path d="M3.500 1v17M1 4l2.500-3L6 4M1 15l2.500 3L6 15" strokeWidth="1.200" /></S>
                  <Field $w={75} $ml={5} $h={21} $border="#666"><FieldText $lh={19}>100%</FieldText></Field>
                  <S w={23} h={22} ml={32} c="#d4d4d4"><path {...F} d="M1 1h21v3h-1l-1-1h-6v12h2v2H7v-2h2V3H3L2 4H1z" /><path d="M1 20h21M1 20l3-2M1 20l3 2M22 20l-3-2M22 20l-3 2" strokeWidth="1" /></S>
                  <Field $w={76} $ml={6} $h={21} $border="#666"><FieldText $lh={19}>100%</FieldText></Field>
                </CharRow>
                <CharRow $h={20} $mt={7} $pl={11} $start>
                  <TinyLabel $w={26} $fs={16} $lh={22}>Aª</TinyLabel>
                  <Field $w={75} $h={20} $ml={3} $border="#666" />
                  <TinyLabel $ml={27} $w={34} $lh={26}>Color</TinyLabel>
                  <ColorChip />
                </CharRow>
              </PropsMain>
              <ScrollRail>
                <Chevron c="#8c8c8c" s={8} />
                <ScrollThumb />
                <Chevron c="#8c8c8c" s={8} />
              </ScrollRail>
            </PropsScrollWrap>
          </Panel>
          <Panel $mt={5} $h={367}>
            <PanelTabs $h={33}>
              <PanelTab $active $w={59}>Layers</PanelTab>
              <PanelTab $w={74}>Channels</PanelTab>
              <PanelTab $w={55}>Paths</PanelTab>
              <Burger />
            </PanelTabs>
            <LayerToolbar $h={40} $pt={9}>
              <DropField $w={107} $h={22}>
                <S w={13} h={13} c="#d0d0d0" strokeWidth="1.300"><circle cx="5.500" cy="5.500" r="4.500" /><path d="M9 9l3.500 3.500" /></S>
                <KindText>Kind</KindText>
                <Chevron />
              </DropField>
              <S w={16} h={13} ml={16} c="#d0d0d0" strokeWidth="1"><rect x=".5" y=".5" width="15" height="12" /><path {...F} d="M2 11l4-5 2 2 2-2 4 5z" /></S>
              <S w={14} h={14} ml={15} c="#d0d0d0" strokeWidth="1.200"><circle cx="7" cy="7" r="6" /><path {...F} d="M7 7L11.200 2.800A6 6 0 0 0 2.800 11.200z" /></S>
              <S w={14} h={14} ml={16} c="#d0d0d0" strokeWidth="1.400"><path d="M1 3V1h12v2M7 1v12M4.500 13h5" /></S>
              <S w={14} h={14} ml={16} c="#d0d0d0" strokeWidth="1"><rect x="2" y="2" width="10" height="10" /><g {...F}><rect x="0" y="0" width="3.500" height="3.500" /><rect x="10.500" y="0" width="3.500" height="3.500" /><rect x="0" y="10.500" width="3.500" height="3.500" /><rect x="10.500" y="10.500" width="3.500" height="3.500" /></g></S>
              <S w={13} h={15} ml={17} c="#d0d0d0" strokeWidth="1"><path d="M5 5V1h5l2.500 2.500V10H9" /><rect x="1" y="6" width="8" height="8" {...F} /></S>
              <ToggleDot $ml={15} />
            </LayerToolbar>
            <LayerToolbar $h={34} $pt={4}>
              <DropField $w={160} $h={23}><span>Normal</span><Chevron /></DropField>
              <TinyLabel $ml={10} $w={47}>Opacity:</TinyLabel>
              <Field $w={63} $h={20} $ml={3}><FieldText $pl={4} $lh={17} $c="#e8e8e8">100%</FieldText><FieldArrow><Chevron /></FieldArrow></Field>
            </LayerToolbar>
            <LayerToolbar $h={39} $pl={8}>
              <TinyLabel $w={32}>Lock:</TinyLabel>
              <S w={14} h={14} ml={8} c="#a8a8a8" strokeWidth="0"><path {...F} d="M0 0h14v14H0z" opacity=".35" /><path {...F} d="M0 0h4.700v4.700H0zM9.300 0H14v4.700H9.300zM4.700 4.700h4.600v4.600H4.700zM0 9.300h4.700V14H0zM9.300 9.300H14V14H9.300z" /></S>
              <S w={16} h={16} ml={13} c="#8c8c8c"><path {...F} d="M15 1C12 4 9 7 7 9l2 2c2-2 4-6 6-10zM6 10l2 2c-1 3-4 4-7 3 2-1 2-4 5-5z" /></S>
              <S w={16} h={16} ml={10} c="#d0d0d0"><path {...F} d="M8 0l2.500 3H9v4h4V5.500L16 8l-3 2.500V9H9v4h1.500L8 16l-2.500-3H7V9H3v1.500L0 8l3-2.500V7h4V3H5.500z" /></S>
              <S w={17} h={16} ml={11} c="#d0d0d0" strokeWidth="1"><path d="M3 3h9l2 10H3zM1 3h3M3 1v3M1 13h16M3 11v4M12 1v3M12 3h4M14 11v4" /></S>
              <S w={13} h={15} ml={12} c="#e0e0e0"><path d="M3 6V4a3.500 3.500 0 0 1 7 0v2" /><path {...F} d="M1 6h11v9H1z" /><circle cx="6.500" cy="10.500" r="1.400" fill="#535353" stroke="none" /></S>
              <TinyLabel $ml={28} $w={24}>Fill:</TinyLabel>
              <Field $w={63} $h={20} $ml={1}><FieldText $pl={4} $lh={17} $c="#e8e8e8">100%</FieldText><FieldArrow><Chevron /></FieldArrow></Field>
            </LayerToolbar>
            <LayerListWrap>
              <LayerList>
                <LayerRow $h={50}>
                  <EyeCol><Eye /></EyeCol>
                  <LayerMain $sel><TypeThumb>T</TypeThumb><LayerName $c="#f2f2f2" $ls={0.15}>Lorem ipsum dolor s...scing elit, sed do</LayerName></LayerMain>
                </LayerRow>
                <LayerRow $h={44}>
                  <EyeCol><Eye /></EyeCol>
                  <LayerMain>
                    <ShapeThumb><ShapeBadge><S w={14} h={14} c="#cfcfcf" strokeWidth="1"><rect x="2" y="2" width="10" height="10" /><g {...F}><rect x="0" y="0" width="3" height="3" /><rect x="11" y="0" width="3" height="3" /><rect x="0" y="11" width="3" height="3" /><rect x="11" y="11" width="3" height="3" /></g></S></ShapeBadge></ShapeThumb>
                    <LayerName>Ellipse 1</LayerName>
                  </LayerMain>
                </LayerRow>
                <LayerRow $h={42}>
                  <EyeCol><Eye /></EyeCol>
                  <LayerMain>
                    <WhiteThumb />
                    <LayerName $it>Background</LayerName>
                    <LockIcon w={12} h={14} c="#d0d0d0" strokeWidth="1.100"><path d="M3 6V3.500a3 3 0 0 1 6 0V6" /><rect x=".7" y="5.500" width="10.600" height="8" /><circle cx="6" cy="9.500" r="1.100" {...F} /></LockIcon>
                  </LayerMain>
                </LayerRow>
              </LayerList>
              <LayersFill />
            </LayerListWrap>
            <LayersFoot>
              <S w={18} h={12} c="#8c8c8c" strokeWidth="1.300"><path d="M7 1.500H5a4.500 4.500 0 0 0 0 9h2M11 1.500h2a4.500 4.500 0 0 1 0 9h-2M5 6h8" /></S>
              <CaretWrap $ml={17}><FxLabel>fx</FxLabel></CaretWrap>
              <S w={16} h={12} ml={20} c="#d0d0d0"><path {...F} fillRule="evenodd" d="M0 0h16v12H0zM8 2.500a3.500 3.500 0 1 0 0 7 3.500 3.500 0 0 0 0-7z" /></S>
              <CaretWrap $ml={19}><S w={14} h={14} c="#d0d0d0" strokeWidth="1.200"><circle cx="7" cy="7" r="6" /><path {...F} d="M7 7L11.200 2.800A6 6 0 0 0 2.800 11.200z" /></S></CaretWrap>
              <S w={16} h={13} ml={18} c="#d0d0d0"><path {...F} d="M0 0h6l2 2h8v11H0z" /></S>
              <S w={15} h={14} ml={17.5} c="#d0d0d0" strokeWidth="1.100"><rect x=".6" y=".6" width="13.800" height="12.800" /><path d="M7.500 3.500v7M4 7h7" /></S>
              <S w={13} h={15} ml={20} c="#d0d0d0" strokeWidth="1.100"><path d="M0 3h13M4 3V1h5v2M1.500 3v11.500h10V3M4.500 5.500v7M6.500 5.500v7M8.500 5.500v7" /></S>
            </LayersFoot>
          </Panel>
        </PanelsColumn>
      </Workspace>

      <Taskbar>
        <svg width="29" height="29" viewBox="0 0 29 29">
          <defs><linearGradient id="win" x1="0" y1="0" x2="1" y2="1"><stop offset="0" stopColor="#7fe3fb" /><stop offset="1" stopColor="#0f8ff0" /></linearGradient></defs>
          <path fill="url(#win)" d="M0 1.500Q0 0 1.500 0H14v14H0zM15 0h12.500Q29 0 29 1.500V14H15zM0 15h14v14H1.500Q0 29 0 27.500zM15 15h14v12.500q0 1.500-1.500 1.500H15z" />
        </svg>
        <SearchPill>
          <S w={17} h={17} c="#1c1c1c" strokeWidth="1.500"><circle cx="7" cy="7" r="5.800" /><path d="M11 11l5 5" /></S>
          <span>Search</span>
        </SearchPill>
        <TaskSlot $ml={18} $w={30}>
          <svg width="30" height="30" viewBox="0 0 30 30"><rect x="0" y="9" width="20" height="20" rx="2" fill="#5e5e5e" /><rect x="8" y="1" width="22" height="21" rx="2" fill="#f5f5f5" /><rect x="8" y="9" width="12" height="13" fill="#b8b8b8" /></svg>
        </TaskSlot>
        <TaskSlot $ml={25} $w={30} $dot>
          <svg width="30" height="30" viewBox="0 0 30 30"><path fill="#e6a41e" d="M0 5q0-2 2-2h8l3 3h15q2 0 2 2v2H0z" /><path fill="#fdd34d" d="M0 9h30v19q0 2-2 2H2q-2 0-2-2z" /><rect x="5" y="20" width="20" height="9" fill="#2187c9" /><rect x="9" y="23" width="12" height="2" fill="#8fd0f4" /></svg>
        </TaskSlot>
        <TaskSlot $ml={26} $w={28}>
          <svg width="28" height="30" viewBox="0 0 28 30"><defs><linearGradient id="ffx" x1="0" y1="0" x2="0" y2="1"><stop offset="0" stopColor="#ffbd30" /><stop offset=".6" stopColor="#ff5a2c" /><stop offset="1" stopColor="#e31587" /></linearGradient></defs><path fill="url(#ffx)" d="M18 0c1 4 9 8 10 15a14 14 0 1 1-27-6c1-2 2-3 2-3 0 2 1 3 2 3 2-4 8-3 13-9z" /><circle cx="14" cy="16" r="7" fill="#7539d1" /><path fill="#ffa22f" d="M4 10c4-2 6-2 9 0-4 0-6 3-6 7 0 4 3 7 8 7-7 1-12-6-11-14z" /></svg>
        </TaskSlot>
        <TaskSlot $ml={26} $w={28} $dot>
          <svg width="28" height="30" viewBox="0 0 28 30"><circle cx="15" cy="6" r="4" fill="#7b83eb" /><circle cx="24" cy="7" r="3" fill="#5059c9" /><path fill="#5059c9" d="M19 11h9v9a4 4 0 0 1-8 0z" /><path fill="#7b83eb" d="M8 11h14v11a7 7 0 0 1-14 0z" /><rect x="0" y="8" width="15" height="15" rx="2" fill="#4b53bc" /><text x="7.500" y="20" textAnchor="middle" fontSize="11" fontWeight="700" fill="#fff" fontFamily="Open Sans, sans-serif">T</text></svg>
        </TaskSlot>
        <TaskSlot $ml={26} $w={30} $dot><ChromeIcon /></TaskSlot>
        <TaskSlot $ml={25} $w={30}>
          <svg width="30" height="30" viewBox="0 0 30 30"><path fill="#23a9f1" d="M22 0l8 3.500v23L22 30 8 17z" /><path fill="#007acc" d="M22 0v30L0 13l3-3 8 6z" /><path fill="#1f9cf0" d="M0 17l3 3 8-6-4-3z" /></svg>
        </TaskSlot>
        <TaskSlot $ml={15} $w={50} $active $dot>
          <PsTile>Ps</PsTile>
        </TaskSlot>
        <TaskSlot $ml={14} $w={32} $dot>
          <svg width="32" height="30" viewBox="0 0 32 30"><rect x="0" y="1" width="23" height="25" rx="3" fill="#ececec" /><rect x="4" y="5" width="11" height="14" fill="none" stroke="#d8351f" strokeWidth="2" strokeDasharray="2.500 2" /><path d="M15 3v18M10 14h19" stroke="#9a9a9a" strokeWidth="2.500" /><path d="M19 15l7 5M23 19l-4 6" stroke="#2a8fe0" strokeWidth="2" fill="none" /><circle cx="29" cy="16" r="2" fill="none" stroke="#2a8fe0" strokeWidth="1.500" /><circle cx="18" cy="27" r="2" fill="none" stroke="#2a8fe0" strokeWidth="1.500" /></svg>
        </TaskSlot>
        <Tray>
          <S w={14} h={9} c="#fff" strokeWidth="1.800"><path d="M1 8l6-6 6 6" /></S>
          <S w={14} h={20} ml={26} c="#5fc4f4" strokeWidth="1.500"><rect x="4" y="1" width="6" height="11" rx="3" /><path d="M1 9a6 6 0 0 0 12 0M7 15v4" /></S>
          <TrayText $ml={26}>ENG</TrayText>
          <S w={20} h={16} ml={22} c="#fff" strokeWidth="1.500"><path d="M5 9a7 7 0 0 1 10 0M8 12a3 3 0 0 1 4 0" /><path d="M1.500 6a12 12 0 0 1 17 0" stroke="#6f8fbe" /><circle cx="10" cy="14.500" r="1.300" {...F} /></S>
          <S w={20} h={16} ml={10} c="#fff" strokeWidth="1.300"><path d="M1 5.500h3L9 1.500v13l-5-4H1zM12 5c1.500 1.500 1.500 4.500 0 6" /><path d="M15 3c2.500 2.500 2.500 7.500 0 10" stroke="#6f8fbe" /></S>
          <S w={20} h={16} ml={10} c="#fff" strokeWidth="1.300"><rect x="1" y="3" width="16" height="11" rx="2" /><path {...F} d="M18 6h2v5h-2zM3 12l2-6h5l-2 6z" /><path {...F} d="M6 0L3 5h3l-1 4 4-6H6z" /></S>
          <Clock>10:46 AM<br />4/26/2025</Clock>
        </Tray>
      </Taskbar>
    </Page>
  );
}
